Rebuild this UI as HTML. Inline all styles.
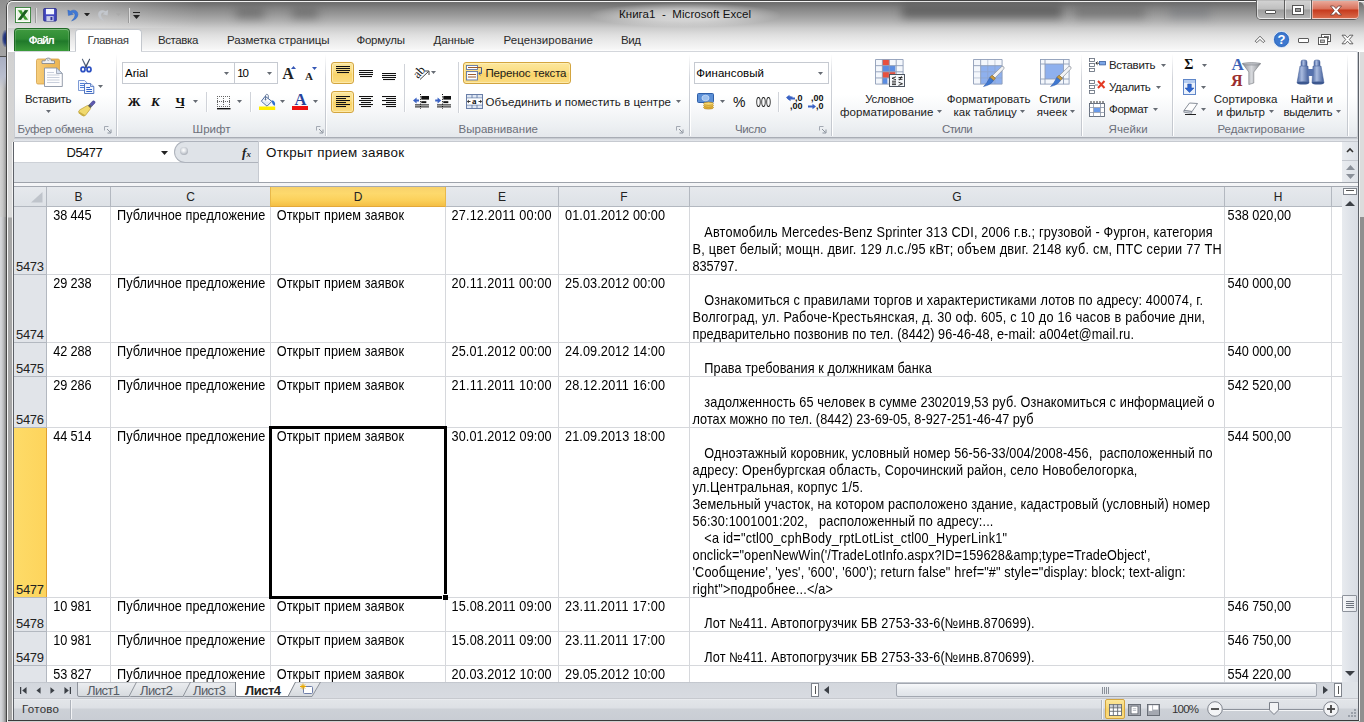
<!DOCTYPE html>
<html lang="ru"><head><meta charset="utf-8"><title>Книга1 - Microsoft Excel</title><style>
html,body{margin:0;padding:0;}
body{width:1364px;height:722px;overflow:hidden;position:relative;background:#7a7a7a;font-family:'Liberation Sans',sans-serif;}
.b{position:absolute;box-sizing:border-box;display:block;}
.t{position:absolute;white-space:pre;display:block;}
</style></head><body>
<div class=b style="left:0px;top:0px;width:1364px;height:722px;background:#9b9b9b"></div>
<div class=b style="left:0px;top:0px;width:7px;height:56px;background:linear-gradient(180deg,#8f8f8f 0,#9d9d9d 20px,#a3a3a3 100%)"></div>
<div class=b style="left:2px;top:30px;width:5px;height:17px;background:radial-gradient(ellipse at 75% 50%,#16286f 0,#2a3c84 40%,rgba(60,75,140,0) 80%)"></div>
<div class=b style="left:0px;top:56px;width:7px;height:1px;background:#4e4e4e"></div>
<div class=b style="left:0px;top:57px;width:7px;height:665px;background:linear-gradient(90deg,#d6d8dc 0,#cfd0d3 25%,#b4b5b7 55%,#858585 85%,#6e6e6e 100%)"></div>
<div class=b style="left:0px;top:57px;width:7px;height:160px;background:linear-gradient(90deg,#d3d3d3 0,#c6c6c6 40%,#a9a9a9 70%,#7c7c7c 100%)"></div>
<div class=b style="left:0px;top:57px;width:6px;height:32px;background:linear-gradient(180deg,#a9afc2 0,#b9bece 60%,rgba(200,203,212,0) 100%)"></div>
<div class=b style="left:6px;top:0px;width:1372px;height:730px;background:#d6d6d6;border:1px solid #454545;border-radius:7px 7px 0 0;"></div>
<div class=b style="left:7px;top:1px;width:1370px;height:730px;border:1px solid #f6f6f6;border-radius:6px 6px 0 0;background:linear-gradient(180deg,#c4c4c4 0,#d2d2d2 60px,#dadada 215px,#a6a6a6 216px,#a6a6a6 100%)"></div>
<div class=b style="left:12px;top:142px;width:1px;height:579px;background:#f4f4f4"></div>
<div class=b style="left:13px;top:142px;width:1px;height:579px;background:#5d6168"></div>
<div class=b style="left:1358px;top:52px;width:1px;height:669px;background:#5d6168"></div>
<div class=b style="left:1359px;top:52px;width:1px;height:669px;background:#f4f4f4"></div>
<div class=b style="left:1360px;top:52px;width:4px;height:165px;background:#dcdcdc"></div>
<div class=b style="left:1360px;top:217px;width:4px;height:505px;background:#8f8f8f"></div>
<div class=b style="left:8px;top:720px;width:1351px;height:1px;background:#3a3a3a"></div>
<div class=b style="left:8px;top:721px;width:1351px;height:1px;background:#d0d0d0"></div>
<div class=b style="left:8px;top:2px;width:1356px;height:50px;border-radius:5px 5px 0 0;background:linear-gradient(180deg,#6f6f6f 0,#727272 2px,#808080 5px,#979797 12px,#afafaf 19px,#cccccc 26px,#dfdfdf 33px,#ececec 40px,#f6f6f6 47px,#ffffff 49px)"></div>
<div class=b style="left:590px;top:3px;width:190px;height:24px;background:radial-gradient(ellipse at 50% 50%,rgba(255,255,255,.6) 0,rgba(255,255,255,.45) 35%,rgba(255,255,255,0) 72%)"></div>
<div class=b style="left:8px;top:2px;width:190px;height:26px;background:linear-gradient(90deg,rgba(255,255,255,.38) 0,rgba(255,255,255,.28) 50%,rgba(255,255,255,0) 100%)"></div>
<div class=b style="left:236px;top:9px;width:28px;height:9px;background:rgba(60,60,60,.45);filter:blur(5px)"></div>
<div class=b style="left:292px;top:9px;width:26px;height:9px;background:rgba(60,60,60,.45);filter:blur(5px)"></div>
<div class=b style="left:902px;top:6px;width:160px;height:12px;background:rgba(45,45,45,.5);filter:blur(5px)"></div>
<div class=b style="left:1075px;top:8px;width:70px;height:10px;background:rgba(60,60,60,.35);filter:blur(5px)"></div>
<div class=b style="left:1170px;top:8px;width:40px;height:10px;background:rgba(70,80,90,.25);filter:blur(5px)"></div>
<span class=t style="left:619.00px;top:6.50px;font:normal normal 11.5px/15px 'Liberation Sans',sans-serif;color:#111;letter-spacing:0.049px;">Книга1  -  Microsoft Excel</span>
<svg class=b style="left:15px;top:7px" width="16" height="16" viewBox="0 0 17 17"><rect x=".5" y=".5" width="16" height="16" fill="#e9f4e4" stroke="#2f7d32"/><rect x="1.5" y="1.5" width="14" height="14" fill="none" stroke="#fff"/><path d="M3 3.5L7 3.5 8.5 6.5 10.5 3.5 14 3.5 10.3 8.6 14 13.5 10.4 13.5 8.4 10.6 6.4 13.5 3 13.5 6.7 8.5Z" fill="#3c9a2e"/><path d="M10.5 3.5L14 3.5 6.4 13.5 3 13.5Z" fill="#1d5c23"/></svg>
<div class=b style="left:35px;top:8px;width:1px;height:15px;background:#9a9a9a"></div>
<div class=b style="left:36px;top:8px;width:1px;height:15px;background:#dcdcdc"></div>
<svg class=b style="left:43.4px;top:8.2px" width="14" height="13.5" viewBox="0 0 15 15"><rect x=".5" y=".5" width="14" height="14" rx="1" fill="#4348c0" stroke="#2a2d8a"/><rect x="3" y="1" width="9" height="6" fill="#f4f6ff"/><rect x="3.5" y="9" width="8" height="5.5" fill="#c9cde8"/><rect x="8" y="10" width="2.2" height="3.5" fill="#30349a"/></svg>
<svg class=b style="left:65.5px;top:8px" width="13" height="14" viewBox="0 0 14 15"><path d="M2 2.2L2.6 8 8 6.6 5.6 5.2C7.8 4 10.2 5.6 9.6 8.4 9.2 10.6 7.6 12.6 6 13.8 9.6 13 12.6 10.6 12.8 7 13 3 8.6.8 4.8 3.4Z" fill="#3f78d6" stroke="#2b5fb8" stroke-width=".5"/></svg>
<svg class=b style="left:83.5px;top:12.55px" width="6" height="3.5" viewBox="0 0 6 3.5"><path d="M0 0H6L3.0 3.5Z" fill="#222"/></svg>
<svg class=b style="left:97px;top:8px" width="13" height="14" viewBox="0 0 14 15"><path d="M12 2.2L11.4 8 6 6.6 8.4 5.2C6.2 4 3.8 5.6 4.4 8.4 4.8 10.6 6.4 12.6 8 13.8 4.4 13 1.4 10.6 1.2 7 1 3 5.4.8 9.2 3.4Z" fill="#c3c7cd"/></svg>
<svg class=b style="left:115.5px;top:13.0px" width="5" height="3" viewBox="0 0 5 3"><path d="M0 0H5L2.5 3Z" fill="#aaa"/></svg>
<div class=b style="left:128px;top:8px;width:1px;height:15px;background:#9a9a9a"></div>
<div class=b style="left:129px;top:8px;width:1px;height:15px;background:#dcdcdc"></div>
<div class=b style="left:133px;top:12px;width:7px;height:1.4px;background:#222"></div>
<svg class=b style="left:133.0px;top:15.0px" width="7" height="4" viewBox="0 0 7 4"><path d="M0 0H7L3.5 4Z" fill="#222"/></svg>
<div class=b style="left:1256px;top:0px;width:103px;height:20px;border:1px solid #5e5e5e;border-top:0;border-radius:0 0 5px 5px;background:#bdbdbd"></div>
<div class=b style="left:1257px;top:1px;width:28px;height:18px;border-radius:0 0 0 4px;border:1px solid rgba(255,255,255,.55);border-top:0;background:linear-gradient(180deg,#d2d2d2 0,#bfbfbf 48%,#9d9d9d 52%,#b4b4b4 100%)"></div>
<div class=b style="left:1285px;top:1px;width:26px;height:18px;border:1px solid rgba(255,255,255,.55);border-top:0;background:linear-gradient(180deg,#d2d2d2 0,#bfbfbf 48%,#9d9d9d 52%,#b4b4b4 100%)"></div>
<div class=b style="left:1284px;top:0px;width:1px;height:19px;background:#5e5e5e"></div>
<div class=b style="left:1311px;top:0px;width:1px;height:19px;background:#5e5e5e"></div>
<div class=b style="left:1312px;top:1px;width:47px;height:18px;border-radius:0 0 4px 0;border:1px solid rgba(255,255,255,.45);border-top:0;background:linear-gradient(180deg,#e9a99a 0,#d9705a 48%,#c6391c 52%,#d8694a 100%)"></div>
<div class=b style="left:1265px;top:10px;width:11px;height:4px;background:#fff;border:1px solid #555;border-radius:1px"></div>
<svg class=b style="left:1292px;top:5px" width="12" height="10" viewBox="0 0 12 10"><rect x=".5" y=".5" width="11" height="9" fill="#fff" stroke="#555"/><rect x="3.5" y="3.5" width="5" height="3" fill="#9a9a9a" stroke="#555"/></svg>
<svg class=b style="left:1329px;top:5px" width="14" height="11" viewBox="0 0 14 11"><path d="M1.5 1h3.2L7 3.6 9.3 1h3.2L8.8 5.5 12.5 10H9.3L7 7.4 4.7 10H1.5L5.2 5.5Z" fill="#fff" stroke="#6b3a33" stroke-width=".8"/></svg>
<div class=b style="left:14px;top:28px;width:56px;height:23px;border-radius:4px 4px 0 0;border:1px solid #1f6a25;border-bottom:0;background:linear-gradient(180deg,#3f9a3f 0,#2e8b33 45%,#20792a 55%,#3a9b39 100%);box-shadow:inset 0 1px 0 rgba(255,255,255,.35), inset 1px 0 0 rgba(255,255,255,.15), inset -1px 0 0 rgba(255,255,255,.15)"></div>
<span class=t style="left:28.70px;top:32.50px;font:normal normal 11.5px/15px 'Liberation Sans',sans-serif;color:#fff;letter-spacing:-0.794px;text-shadow:0 0 .7px #fff">Файл</span>
<div class=b style="left:75px;top:29px;width:67px;height:23px;border-radius:4px 4px 0 0;border:1px solid #c3c7cd;border-bottom:0;background:#fff"></div>
<span class=t style="left:87.50px;top:33.00px;font:normal normal 11.5px/15px 'Liberation Sans',sans-serif;color:#3b3b3b;letter-spacing:-0.380px;">Главная</span>
<span class=t style="left:158.00px;top:33.00px;font:normal normal 11.5px/15px 'Liberation Sans',sans-serif;color:#2a2a2a;letter-spacing:-0.408px;">Вставка</span>
<span class=t style="left:227.00px;top:33.00px;font:normal normal 11.5px/15px 'Liberation Sans',sans-serif;color:#2a2a2a;letter-spacing:-0.114px;">Разметка страницы</span>
<span class=t style="left:356.50px;top:33.00px;font:normal normal 11.5px/15px 'Liberation Sans',sans-serif;color:#2a2a2a;letter-spacing:-0.258px;">Формулы</span>
<span class=t style="left:433.50px;top:33.00px;font:normal normal 11.5px/15px 'Liberation Sans',sans-serif;color:#2a2a2a;letter-spacing:-0.113px;">Данные</span>
<span class=t style="left:503.50px;top:33.00px;font:normal normal 11.5px/15px 'Liberation Sans',sans-serif;color:#2a2a2a;letter-spacing:0.053px;">Рецензирование</span>
<span class=t style="left:621.00px;top:33.00px;font:normal normal 11.5px/15px 'Liberation Sans',sans-serif;color:#2a2a2a;letter-spacing:-0.406px;">Вид</span>
<svg class=b style="left:1254px;top:34px" width="12" height="10" viewBox="0 0 12 10"><path d="M1.2 7.2L6 2.2 10.8 7.2 9.2 8.6 6 5.4 2.8 8.6Z" fill="#fff" stroke="#555" stroke-width=".9"/></svg>
<svg class=b style="left:1273px;top:31px" width="17" height="17" viewBox="0 0 17 17"><circle cx="8.5" cy="8.5" r="8" fill="#3c78cf" stroke="#dfe9f7" stroke-width="1"/><circle cx="8.5" cy="8.5" r="7" fill="none" stroke="#2d63b4" stroke-width=".6"/></svg>
<span class=t style="left:1277.52px;top:31.00px;font:normal bold 13px/17px 'Liberation Sans',sans-serif;color:#fff;">?</span>
<div class=b style="left:1298px;top:38px;width:11px;height:5px;background:#fff;border:1px solid #5a5a5a;border-radius:1px"></div>
<svg class=b style="left:1318px;top:34px" width="13" height="11" viewBox="0 0 13 11"><rect x="3.5" y=".5" width="9" height="7" fill="#fff" stroke="#5a5a5a"/><rect x="6.5" y="2.5" width="4" height="2.5" fill="#fff" stroke="#5a5a5a" stroke-width=".8"/><rect x=".5" y="3.5" width="9" height="7" fill="#fff" stroke="#5a5a5a"/><rect x="2.5" y="6" width="4" height="2.5" fill="#bbb" stroke="#5a5a5a" stroke-width=".8"/></svg>
<svg class=b style="left:1341px;top:34px" width="13" height="11" viewBox="0 0 13 11"><path d="M1 1.2h3.2L6.5 3.8 8.8 1.2H12L8.3 5.5 12 9.8H8.8L6.5 7.2 4.2 9.8H1L4.7 5.5Z" fill="#fff" stroke="#555" stroke-width=".9"/></svg>
<div class=b style="left:14px;top:51px;width:1344px;height:87px;border:1px solid #c9cdd3;border-top-color:#d3d6db;border-bottom-color:#a9adb5;border-radius:0 2px 2px 1px;background:linear-gradient(180deg,#ffffff 0,#ffffff 50%,#f6f7f9 70%,#eceff2 88%,#e5e8ec 100%)"></div>
<div class=b style="left:76px;top:50px;width:65px;height:2px;background:#fff"></div>
<div class=b style="left:14px;top:138px;width:1344px;height:4px;background:linear-gradient(180deg,#b8bcc3 0,#d9dce1 1px,#e4e7ec 3px,#a8acb4 4px)"></div>
<div class=b style="left:116px;top:54px;width:1px;height:82px;background:linear-gradient(180deg,rgba(200,204,211,0) 0,#d0d3d9 30%,#c2c6cd 100%)"></div>
<div class=b style="left:117px;top:54px;width:1px;height:82px;background:linear-gradient(180deg,rgba(255,255,255,0) 0,#fff 30%,#fff 100%)"></div>
<div class=b style="left:325px;top:54px;width:1px;height:82px;background:linear-gradient(180deg,rgba(200,204,211,0) 0,#d0d3d9 30%,#c2c6cd 100%)"></div>
<div class=b style="left:326px;top:54px;width:1px;height:82px;background:linear-gradient(180deg,rgba(255,255,255,0) 0,#fff 30%,#fff 100%)"></div>
<div class=b style="left:689px;top:54px;width:1px;height:82px;background:linear-gradient(180deg,rgba(200,204,211,0) 0,#d0d3d9 30%,#c2c6cd 100%)"></div>
<div class=b style="left:690px;top:54px;width:1px;height:82px;background:linear-gradient(180deg,rgba(255,255,255,0) 0,#fff 30%,#fff 100%)"></div>
<div class=b style="left:831px;top:54px;width:1px;height:82px;background:linear-gradient(180deg,rgba(200,204,211,0) 0,#d0d3d9 30%,#c2c6cd 100%)"></div>
<div class=b style="left:832px;top:54px;width:1px;height:82px;background:linear-gradient(180deg,rgba(255,255,255,0) 0,#fff 30%,#fff 100%)"></div>
<div class=b style="left:1081px;top:54px;width:1px;height:82px;background:linear-gradient(180deg,rgba(200,204,211,0) 0,#d0d3d9 30%,#c2c6cd 100%)"></div>
<div class=b style="left:1082px;top:54px;width:1px;height:82px;background:linear-gradient(180deg,rgba(255,255,255,0) 0,#fff 30%,#fff 100%)"></div>
<div class=b style="left:1172px;top:54px;width:1px;height:82px;background:linear-gradient(180deg,rgba(200,204,211,0) 0,#d0d3d9 30%,#c2c6cd 100%)"></div>
<div class=b style="left:1173px;top:54px;width:1px;height:82px;background:linear-gradient(180deg,rgba(255,255,255,0) 0,#fff 30%,#fff 100%)"></div>
<div class=b style="left:1347px;top:54px;width:1px;height:82px;background:linear-gradient(180deg,rgba(200,204,211,0) 0,#d0d3d9 30%,#c2c6cd 100%)"></div>
<div class=b style="left:1348px;top:54px;width:1px;height:82px;background:linear-gradient(180deg,rgba(255,255,255,0) 0,#fff 30%,#fff 100%)"></div>
<svg class=b style="left:35px;top:56px" width="29" height="32" viewBox="0 0 29 32"><defs><linearGradient id="pb" x1="0" x2="1"><stop offset="0" stop-color="#f7cf7e"/><stop offset=".5" stop-color="#f1bd5e"/><stop offset="1" stop-color="#eab453"/></linearGradient></defs><rect x="1.5" y="3" width="23" height="25" rx="1.5" fill="url(#pb)" stroke="#d3a046" stroke-width=".8"/><path d="M7 7.500V4.800H10.200C10.200 1.200 16.300 1.200 16.300 4.800H19.500V7.500Z" fill="#eef0f3" stroke="#7c828c" stroke-width=".8"/><circle cx="13.250" cy="3.600" r="1" fill="#fff" stroke="#7c828c" stroke-width=".5"/><path d="M9.500 12H21.500L27.300 17.500V30.500H9.500Z" fill="#fdfdfe" stroke="#8a93a3" stroke-width=".9"/><path d="M21.500 12V17.500H27.300Z" fill="#d9e2f2" stroke="#8a93a3" stroke-width=".7"/><path d="M12 16.500H19M12 19H24.500M12 21.500H24.500M12 24H24.500M12 26.500H24.500" stroke="#c3cad8" stroke-width=".9"/></svg>
<span class=t style="left:25.00px;top:91.80px;font:normal normal 11.5px/15px 'Liberation Sans',sans-serif;color:#222;letter-spacing:-0.321px;">Вставить</span>
<svg class=b style="left:45.5px;top:110.2px" width="5" height="3" viewBox="0 0 5 3"><path d="M0 0H5L2.5 3Z" fill="#666b73"/></svg>
<svg class=b style="left:79.5px;top:57.5px" width="12" height="15" viewBox="0 0 12 15"><path d="M2.600 .5L7.300 9.500L6 10.200L1.800 1.200Z" fill="#56657e"/><path d="M9.400 .5L4.700 9.500L6 10.200L10.200 1.200Z" fill="#3f4d66"/><ellipse cx="3" cy="11.400" rx="2" ry="2.300" fill="none" stroke="#2c50c2" stroke-width="1.700"/><ellipse cx="9" cy="11.400" rx="2" ry="2.300" fill="none" stroke="#2c50c2" stroke-width="1.700"/></svg>
<svg class=b style="left:77.5px;top:79.5px" width="17" height="14" viewBox="0 0 17 14"><path d="M.5.5H6.500L9.500 3.300V10.500H.5Z" fill="#f3f7ff" stroke="#6d8fd0" stroke-width=".9"/><path d="M2 3.500H6M2 5.500H7.500M2 7.500H7.500" stroke="#4f7fd6" stroke-width="1"/><path d="M6.500 3.500H12.500L15.800 6.500V13.500H6.500Z" fill="#f3f7ff" stroke="#3f66b8" stroke-width=".9"/><path d="M12.500 3.500V6.500H15.800" fill="#c9d8f3" stroke="#3f66b8" stroke-width=".7"/><path d="M8.300 7.500H12M8.300 9.500H14M8.300 11.500H14" stroke="#2f62c8" stroke-width="1.100"/></svg>
<svg class=b style="left:98.0px;top:85.2px" width="5" height="3" viewBox="0 0 5 3"><path d="M0 0H5L2.5 3Z" fill="#666b73"/></svg>
<svg class=b style="left:77px;top:100px" width="19" height="17" viewBox="0 0 19 17"><path d="M12.800 4.200L15.500 1.200Q16.800 .4 17.800 1.500Q18.500 2.600 17.500 3.600L14.800 6.200Z" fill="#5d59b0" stroke="#3b3a86" stroke-width=".6"/><path d="M10.800 5.800L12.600 4 15 6.400 13.200 8.200Z" fill="#55585f"/><path d="M3.200 9.600L10.600 5.400 13.600 8.600 8.400 15.400Q6.500 16.400 4.800 15.200L1.500 12.200Q1.800 10.400 3.200 9.600Z" fill="#f0d96e" stroke="#b79a35" stroke-width=".7"/><path d="M2 12.500L7.500 15.800" stroke="#c9ad42" stroke-width="1.600"/></svg>
<span class=t style="left:17.60px;top:122.00px;font:normal normal 11.5px/15px 'Liberation Sans',sans-serif;color:#6c6f7a;letter-spacing:-0.205px;">Буфер обмена</span>
<svg class=b style="left:104px;top:126px" width="8" height="8" viewBox="0 0 8 8"><path d="M.5 4.5V.5H4.5" fill="none" stroke="#a3a9b3"/><path d="M3 3L6.5 6.5M7 3.5V7H3.5" fill="none" stroke="#8b929d" stroke-width="1"/></svg>
<div class=b style="left:122px;top:62px;width:113px;height:22px;background:#fff;border:1px solid #c6cad1"></div>
<div class=b style="left:234px;top:62px;width:44px;height:22px;background:#fff;border:1px solid #c6cad1"></div>
<span class=t style="left:125.00px;top:65.50px;font:normal normal 11.5px/15px 'Liberation Sans',sans-serif;color:#000;letter-spacing:-0.004px;">Arial</span>
<svg class=b style="left:224.0px;top:72.0px" width="5" height="3" viewBox="0 0 5 3"><path d="M0 0H5L2.5 3Z" fill="#666b73"/></svg>
<span class=t style="left:237.30px;top:65.50px;font:normal normal 11.5px/15px 'Liberation Sans',sans-serif;color:#000;letter-spacing:-1.297px;">10</span>
<svg class=b style="left:267.0px;top:72.0px" width="5" height="3" viewBox="0 0 5 3"><path d="M0 0H5L2.5 3Z" fill="#666b73"/></svg>
<span class=t style="left:282.30px;top:63.30px;font:normal bold 16px/21px 'Liberation Serif',serif;color:#222;letter-spacing:1.637px;">A</span>
<svg class=b style="left:291.3px;top:66px" width="5" height="3" viewBox="0 0 5 3"><path d="M0 3H5L2.5 0Z" fill="#3557b5"/></svg>
<span class=t style="left:305.00px;top:68.60px;font:normal bold 11px/14px 'Liberation Serif',serif;color:#222;letter-spacing:3.447px;transform:scaleX(1.0)">A</span>
<svg class=b style="left:312px;top:66.8px" width="5" height="3" viewBox="0 0 5 3"><path d="M0 0H5L2.5 3Z" fill="#3557b5"/></svg>
<span class=t style="left:127.80px;top:93.00px;font:normal bold 13px/17px 'Liberation Serif',serif;color:#111;letter-spacing:0.341px;">Ж</span>
<span class=t style="left:151.00px;top:93.00px;font:italic bold 13px/17px 'Liberation Serif',serif;color:#111;letter-spacing:3.172px;">К</span>
<span class=t style="left:175.50px;top:93.00px;font:normal bold 13px/17px 'Liberation Serif',serif;color:#111;letter-spacing:-1.047px;text-decoration:underline">Ч</span>
<svg class=b style="left:193.0px;top:100.0px" width="5" height="3" viewBox="0 0 5 3"><path d="M0 0H5L2.5 3Z" fill="#666b73"/></svg>
<div class=b style="left:206px;top:92px;width:1px;height:20px;background:#d0d3d9"></div>
<div class=b style="left:207px;top:92px;width:1px;height:20px;background:#fff"></div>
<svg class=b style="left:217px;top:95px" width="14" height="15" viewBox="0 0 14 15"><path d="M0 1.5H13" stroke="#666" stroke-width="1" stroke-dasharray="1 1"/><path d="M0 6.5H13" stroke="#666" stroke-width="1" stroke-dasharray="1 1"/><path d="M0 11.5H13" stroke="#666" stroke-width="1" stroke-dasharray="1 1"/><path d="M0.5 1V12" stroke="#666" stroke-width="1" stroke-dasharray="1 1"/><path d="M6.5 1V12" stroke="#666" stroke-width="1" stroke-dasharray="1 1"/><path d="M12.5 1V12" stroke="#666" stroke-width="1" stroke-dasharray="1 1"/><path d="M0 13.700H13.500" stroke="#111" stroke-width="1.400"/></svg>
<svg class=b style="left:237.0px;top:100.0px" width="5" height="3" viewBox="0 0 5 3"><path d="M0 0H5L2.5 3Z" fill="#666b73"/></svg>
<div class=b style="left:250px;top:92px;width:1px;height:20px;background:#d0d3d9"></div>
<div class=b style="left:251px;top:92px;width:1px;height:20px;background:#fff"></div>
<svg class=b style="left:258.8px;top:92.5px" width="17" height="17" viewBox="0 0 17 17"><path d="M6.200 3.200L12.800 8.400 8 13.200 2.400 8.200Z" fill="#fdfdfe" stroke="#44659c" stroke-width="1"/><path d="M6.500 6.500V3C6.500 .8 9.300 .8 9.300 3V5.600" fill="none" stroke="#5a6f93" stroke-width=".9"/><circle cx="6.500" cy="6.500" r=".9" fill="#5a6f93"/><path d="M12.800 7.200C15.300 7.500 16.600 9.400 16 12.800 14 12 13.200 10.400 12.800 8.400Z" fill="#2f6fd0"/><path d="M3.500 8.200L8 12.200 12 8.400" fill="#dfe8f6" stroke="none"/><rect x="0" y="13.500" width="16.200" height="3.500" fill="#ffee00"/></svg>
<svg class=b style="left:279.5px;top:100.0px" width="5" height="3" viewBox="0 0 5 3"><path d="M0 0H5L2.5 3Z" fill="#666b73"/></svg>
<span class=t style="left:294.60px;top:88.90px;font:normal bold 16.5px/21px 'Liberation Serif',serif;color:#27439c;">A</span>
<div class=b style="left:291.8px;top:106px;width:16.2px;height:3.5px;background:#ee1111"></div>
<svg class=b style="left:313.0px;top:100.0px" width="5" height="3" viewBox="0 0 5 3"><path d="M0 0H5L2.5 3Z" fill="#666b73"/></svg>
<span class=t style="left:192.60px;top:122.00px;font:normal normal 11.5px/15px 'Liberation Sans',sans-serif;color:#6c6f7a;letter-spacing:0.039px;">Шрифт</span>
<svg class=b style="left:316px;top:126px" width="8" height="8" viewBox="0 0 8 8"><path d="M.5 4.5V.5H4.5" fill="none" stroke="#a3a9b3"/><path d="M3 3L6.5 6.5M7 3.5V7H3.5" fill="none" stroke="#8b929d" stroke-width="1"/></svg>
<div class=b style="left:331px;top:62px;width:23px;height:22px;border:1px solid #d3a53f;border-radius:3px;background:linear-gradient(180deg,#fce79c 0,#fbdd82 45%,#f9d469 55%,#fbdc82 100%);box-shadow:inset 0 0 0 1px rgba(255,244,200,.55)"></div>
<div class=b style="left:331px;top:90.5px;width:23px;height:22px;border:1px solid #d3a53f;border-radius:3px;background:linear-gradient(180deg,#fce79c 0,#fbdd82 45%,#f9d469 55%,#fbdc82 100%);box-shadow:inset 0 0 0 1px rgba(255,244,200,.55)"></div>
<svg class=b style="left:336px;top:66px" width="14" height="8" viewBox="0 0 14 8"><rect x="0.0" y="0" width="14" height="1.05" fill="#111"/><rect x="0.0" y="2" width="14" height="1.05" fill="#111"/><rect x="0.0" y="4" width="14" height="1.05" fill="#111"/><rect x="1.0" y="6" width="12" height="1.05" fill="#111"/></svg>
<svg class=b style="left:359px;top:70px" width="14" height="8" viewBox="0 0 14 8"><rect x="0.0" y="0" width="14" height="1.05" fill="#111"/><rect x="0.0" y="2" width="14" height="1.05" fill="#111"/><rect x="0.0" y="4" width="14" height="1.05" fill="#111"/><rect x="1.0" y="6" width="12" height="1.05" fill="#111"/></svg>
<svg class=b style="left:382px;top:73px" width="14" height="8" viewBox="0 0 14 8"><rect x="0.0" y="0" width="14" height="1.05" fill="#111"/><rect x="0.0" y="2" width="14" height="1.05" fill="#111"/><rect x="0.0" y="4" width="14" height="1.05" fill="#111"/><rect x="1.0" y="6" width="12" height="1.05" fill="#111"/></svg>
<div class=b style="left:404px;top:64px;width:1px;height:48px;background:#d0d3d9"></div>
<div class=b style="left:405px;top:64px;width:1px;height:48px;background:#fff"></div>
<span class=t style="left:413.20px;top:63.50px;font:normal normal 12.5px/16px 'Liberation Serif',serif;color:#111;transform:rotate(-48deg);transform-origin:50% 50%">ab</span>
<svg class=b style="left:418px;top:69px" width="13" height="12" viewBox="0 0 13 12"><path d="M2 10.5L10.5 2.5" stroke="#444" stroke-width="1"/><path d="M7 2H11V6" fill="none" stroke="#444" stroke-width="1"/></svg>
<svg class=b style="left:431.3px;top:71.0px" width="5" height="3" viewBox="0 0 5 3"><path d="M0 0H5L2.5 3Z" fill="#666b73"/></svg>
<svg class=b style="left:336px;top:96px" width="14" height="12" viewBox="0 0 14 12"><rect x="0" y="0" width="14" height="1.05" fill="#111"/><rect x="0" y="2" width="10" height="1.05" fill="#111"/><rect x="0" y="4" width="14" height="1.05" fill="#111"/><rect x="0" y="6" width="10" height="1.05" fill="#111"/><rect x="0" y="8" width="14" height="1.05" fill="#111"/><rect x="0" y="10" width="10" height="1.05" fill="#111"/></svg>
<svg class=b style="left:359px;top:96px" width="14" height="12" viewBox="0 0 14 12"><rect x="0.0" y="0" width="14" height="1.05" fill="#111"/><rect x="2.0" y="2" width="10" height="1.05" fill="#111"/><rect x="0.0" y="4" width="14" height="1.05" fill="#111"/><rect x="2.0" y="6" width="10" height="1.05" fill="#111"/><rect x="0.0" y="8" width="14" height="1.05" fill="#111"/><rect x="2.0" y="10" width="10" height="1.05" fill="#111"/></svg>
<svg class=b style="left:382px;top:96px" width="14" height="12" viewBox="0 0 14 12"><rect x="0" y="0" width="14" height="1.05" fill="#111"/><rect x="4" y="2" width="10" height="1.05" fill="#111"/><rect x="0" y="4" width="14" height="1.05" fill="#111"/><rect x="4" y="6" width="10" height="1.05" fill="#111"/><rect x="0" y="8" width="14" height="1.05" fill="#111"/><rect x="4" y="10" width="10" height="1.05" fill="#111"/></svg>
<svg class=b style="left:413px;top:94px" width="17" height="15" viewBox="0 0 17 15"><path d="M0 6.5L3.6 3.4V5.6H6V7.4H3.6V9.6Z" fill="#3a62c4"/><rect x="8.3" y="2" width="7.7" height="3.6" fill="#111"/><rect x="8.3" y="7.2" width="5" height="1.9" fill="#111"/><path d="M2 10.9H16M2 12.9H16" stroke="#111" stroke-width="1"/><path d="M7.5 0V15" stroke="#111" stroke-width="1" stroke-dasharray="1 1.4"/></svg>
<svg class=b style="left:435px;top:94px" width="17" height="15" viewBox="0 0 17 15"><path d="M6.2 6.5L2.6 3.4V5.6H.2V7.4H2.6V9.6Z" fill="#3a62c4"/><rect x="8.3" y="2" width="7.7" height="3.6" fill="#111"/><rect x="8.3" y="7.2" width="5" height="1.9" fill="#111"/><path d="M2 10.9H16M2 12.9H16" stroke="#111" stroke-width="1"/><path d="M7.5 0V15" stroke="#111" stroke-width="1" stroke-dasharray="1 1.4"/></svg>
<div class=b style="left:458px;top:62px;width:1px;height:51px;background:#d0d3d9"></div>
<div class=b style="left:459px;top:62px;width:1px;height:51px;background:#fff"></div>
<div class=b style="left:463px;top:62px;width:108px;height:22px;border:1px solid #d3a53f;border-radius:3px;background:linear-gradient(180deg,#fce79c 0,#fbdd82 45%,#f9d469 55%,#fbdc82 100%);box-shadow:inset 0 0 0 1px rgba(255,244,200,.55)"></div>
<svg class=b style="left:466px;top:64.5px" width="17" height="16" viewBox="0 0 17 16"><rect x=".5" y=".5" width="11" height="4" fill="#fff" stroke="#5f77a6" stroke-width=".9"/><path d="M2 2.500H15.500" stroke="#9a5a2c" stroke-width="1"/><path d="M15.500 2.500V8.500L13 8.500M14.500 6.800L12.800 8.500 14.500 10.200" fill="none" stroke="#3f5f9a" stroke-width="1"/><rect x=".5" y="6.500" width="11" height="8.500" fill="#e9eef8" stroke="#5f77a6" stroke-width=".9"/><rect x="1.500" y="7.500" width="9" height="6.500" fill="#fff"/><path d="M2 9.500H10M2 12H10" stroke="#9a5a2c" stroke-width="1.100"/></svg>
<span class=t style="left:485.50px;top:65.50px;font:normal normal 11.5px/15px 'Liberation Sans',sans-serif;color:#1a1a1a;letter-spacing:-0.163px;">Перенос текста</span>
<svg class=b style="left:466px;top:94px" width="17" height="15" viewBox="0 0 17 15"><rect x=".5" y=".5" width="16" height="14" fill="#dfe7f4" stroke="#6a7fa8"/><path d="M.5 4H16.5M.5 11H16.5M6 .5V4M11 .5V4M6 11V14.5M11 11V14.5" stroke="#6a7fa8" stroke-width=".9"/><rect x="1" y="4.5" width="15" height="6" fill="#fff"/><path d="M1.5 7.5H4.5M15.5 7.5H12.5" stroke="#333" stroke-width="1"/><path d="M3 6L1.2 7.5 3 9M14 6L15.8 7.5 14 9" fill="none" stroke="#333" stroke-width=".8"/></svg>
<span class=t style="left:6.00px;top:1.00px;font:normal bold 9px/12px 'Liberation Serif',serif;color:#111;left:472px;top:95px">a</span>
<span class=t style="left:485.50px;top:94.50px;font:normal normal 11.5px/15px 'Liberation Sans',sans-serif;color:#1a1a1a;letter-spacing:0.055px;">Объединить и поместить в центре</span>
<svg class=b style="left:676.0px;top:100.0px" width="5" height="3" viewBox="0 0 5 3"><path d="M0 0H5L2.5 3Z" fill="#666b73"/></svg>
<span class=t style="left:458.50px;top:122.00px;font:normal normal 11.5px/15px 'Liberation Sans',sans-serif;color:#6c6f7a;letter-spacing:0.030px;">Выравнивание</span>
<svg class=b style="left:676px;top:126px" width="8" height="8" viewBox="0 0 8 8"><path d="M.5 4.5V.5H4.5" fill="none" stroke="#a3a9b3"/><path d="M3 3L6.5 6.5M7 3.5V7H3.5" fill="none" stroke="#8b929d" stroke-width="1"/></svg>
<div class=b style="left:694px;top:62px;width:135px;height:22px;background:#fff;border:1px solid #c6cad1"></div>
<span class=t style="left:696.30px;top:65.50px;font:normal normal 11.5px/15px 'Liberation Sans',sans-serif;color:#000;letter-spacing:0.040px;">Финансовый</span>
<svg class=b style="left:818.0px;top:72.0px" width="5" height="3" viewBox="0 0 5 3"><path d="M0 0H5L2.5 3Z" fill="#666b73"/></svg>
<svg class=b style="left:697px;top:93px" width="19" height="17" viewBox="0 0 19 17"><rect x=".5" y=".5" width="16" height="9" rx="1" fill="#5b8fd6" stroke="#2f5fa8"/><ellipse cx="8.5" cy="5" rx="3.6" ry="2.8" fill="#9cc0ee" stroke="#dbe8fa" stroke-width=".6"/><ellipse cx="11.5" cy="14.5" rx="5" ry="1.6" fill="#e8b53a" stroke="#a87a18" stroke-width=".6"/><ellipse cx="11.5" cy="12.6" rx="5" ry="1.6" fill="#f2c850" stroke="#a87a18" stroke-width=".6"/><ellipse cx="11.5" cy="10.7" rx="5" ry="1.6" fill="#f8d870" stroke="#a87a18" stroke-width=".6"/></svg>
<svg class=b style="left:719.5px;top:100.0px" width="5" height="3" viewBox="0 0 5 3"><path d="M0 0H5L2.5 3Z" fill="#666b73"/></svg>
<span class=t style="left:733.00px;top:92.50px;font:normal normal 14px/18px 'Liberation Sans',sans-serif;color:#111;letter-spacing:0.047px;">%</span>
<span class=t style="left:755.50px;top:93.00px;font:normal normal 14px/18px 'Liberation Sans',sans-serif;color:#111;transform:scaleX(.64);transform-origin:0 50%">000</span>
<div class=b style="left:778px;top:92px;width:1px;height:20px;background:#d0d3d9"></div>
<div class=b style="left:779px;top:92px;width:1px;height:20px;background:#fff"></div>
<svg class=b style="left:786px;top:94px" width="18" height="15" viewBox="0 0 18 15"><path d="M6.5 3.5L3 .8V2.6H0V4.4H3V6.2Z" fill="#3a62c4" transform="translate(6.5,0) scale(-1,1)"/></svg>
<span class=t style="left:795.00px;top:92.00px;font:normal bold 9px/12px 'Liberation Sans',sans-serif;color:#111;">,0</span>
<span class=t style="left:790.00px;top:100.00px;font:normal bold 9px/12px 'Liberation Sans',sans-serif;color:#111;">,00</span>
<span class=t style="left:811.00px;top:92.00px;font:normal bold 9px/12px 'Liberation Sans',sans-serif;color:#111;">,00</span>
<span class=t style="left:816.00px;top:100.00px;font:normal bold 9px/12px 'Liberation Sans',sans-serif;color:#111;">,0</span>
<svg class=b style="left:808px;top:103px" width="8" height="7" viewBox="0 0 8 7"><path d="M8 3.5L4.5 .8V2.6H0V4.4H4.5V6.2Z" fill="#3a62c4"/></svg>
<svg class=b style="left:787px;top:94.5px" width="8" height="7" viewBox="0 0 8 7"><path d="M0 3.5L3.5 .8V2.6H8V4.4H3.5V6.2Z" fill="#3a62c4"/></svg>
<span class=t style="left:735.00px;top:122.00px;font:normal normal 11.5px/15px 'Liberation Sans',sans-serif;color:#6c6f7a;letter-spacing:-0.395px;">Число</span>
<svg class=b style="left:819px;top:126px" width="8" height="8" viewBox="0 0 8 8"><path d="M.5 4.5V.5H4.5" fill="none" stroke="#a3a9b3"/><path d="M3 3L6.5 6.5M7 3.5V7H3.5" fill="none" stroke="#8b929d" stroke-width="1"/></svg>
<svg class=b style="left:875px;top:58.7px" width="31" height="29" viewBox="0 0 31 29"><rect x=".5" y=".5" width="27.600" height="24.600" fill="#f4f7fc"/><rect x="7.400" y=".5" width="6.900" height="6.150" fill="#e8503e"/><rect x="7.400" y="6.650" width="13" height="6.150" fill="#5b8de2"/><rect x="7.400" y="12.800" width="13" height="6.150" fill="#e8503e"/><rect x="7.400" y="18.950" width="5" height="6.150" fill="#5b8de2"/><path d="M0.50 .5V25.100M.5 0.50H28.100" stroke="#8e9db8" stroke-width=".9"/><path d="M7.40 .5V25.100M.5 6.65H28.100" stroke="#8e9db8" stroke-width=".9"/><path d="M14.30 .5V25.100M.5 12.80H28.100" stroke="#8e9db8" stroke-width=".9"/><path d="M21.20 .5V25.100M.5 18.95H28.100" stroke="#8e9db8" stroke-width=".9"/><path d="M28.10 .5V25.100M.5 25.10H28.100" stroke="#8e9db8" stroke-width=".9"/><rect x="14.500" y="15.500" width="15" height="12" fill="#f6f8fb" stroke="#4d5561"/><path d="M21 17.800L17 19.300 21 20.800M17 22.200H21M23.500 18.500H27.500M23.500 20.300H27.500M26.500 17.300L24.500 21.300M17 24H21M17 25.600H21M23.500 23.200L27.500 24.800 23.500 26.400" fill="none" stroke="#1d1d1d" stroke-width=".9"/></svg>
<span class=t style="left:865.30px;top:91.80px;font:normal normal 11.5px/15px 'Liberation Sans',sans-serif;color:#222;letter-spacing:-0.297px;">Условное</span>
<span class=t style="left:840.00px;top:104.80px;font:normal normal 11.5px/15px 'Liberation Sans',sans-serif;color:#222;letter-spacing:0.089px;">форматирование</span>
<svg class=b style="left:936.5px;top:110.2px" width="5" height="3" viewBox="0 0 5 3"><path d="M0 0H5L2.5 3Z" fill="#666b73"/></svg>
<svg class=b style="left:973px;top:58.7px" width="33" height="31" viewBox="0 0 33 31"><rect x=".5" y=".5" width="28.600" height="24.600" fill="#f4f7fc"/><rect x="7.650" y="6.650" width="21.450" height="18.450" fill="#8eb0ee"/><path d="M0.50 .5V25.100M.5 0.50H29.100" stroke="#8e9db8" stroke-width=".9" opacity="1"/><path d="M7.65 .5V25.100M.5 6.65H29.100" stroke="#8e9db8" stroke-width=".9" opacity="1"/><path d="M14.80 .5V25.100M.5 12.80H29.100" stroke="#8e9db8" stroke-width=".9" opacity="0.55"/><path d="M21.95 .5V25.100M.5 18.95H29.100" stroke="#8e9db8" stroke-width=".9" opacity="0.55"/><path d="M29.10 .5V25.100M.5 25.10H29.100" stroke="#8e9db8" stroke-width=".9" opacity="1"/><g transform="translate(10.5,7)"><path d="M18.200 .6Q19.600 -.2 20.400 1Q21 2.200 20 3.200L11.500 12 8.800 9.500Z" fill="#f2f3f5" stroke="#8a8f98" stroke-width=".7"/><path d="M8.600 9.200L11.800 12.200 10 14.600 6.200 11.400Z" fill="#c89a3e" stroke="#8f6a1e" stroke-width=".6"/><path d="M6.300 11.500L9.900 14.600C8.500 17.500 4.500 19.600 0 20.500 2.800 18 4.400 15 6.300 11.500Z" fill="#3f78d0" stroke="#2a57a8" stroke-width=".5"/></g></svg>
<span class=t style="left:946.70px;top:91.80px;font:normal normal 11.5px/15px 'Liberation Sans',sans-serif;color:#222;letter-spacing:0.029px;">Форматировать</span>
<span class=t style="left:953.50px;top:104.80px;font:normal normal 11.5px/15px 'Liberation Sans',sans-serif;color:#222;letter-spacing:0.032px;">как таблицу</span>
<svg class=b style="left:1020.0px;top:110.2px" width="5" height="3" viewBox="0 0 5 3"><path d="M0 0H5L2.5 3Z" fill="#666b73"/></svg>
<svg class=b style="left:1040px;top:58.7px" width="33" height="31" viewBox="0 0 33 31"><rect x=".5" y=".5" width="28.600" height="24.600" fill="#f4f7fc" stroke="#8e9db8" stroke-width=".9"/><rect x="5" y="5" width="18.500" height="15" fill="#8eb0ee"/><path d="M.5 5H29.100M.5 20H29.100M5 .5V25.100M23.500 .5V25.100" stroke="#8e9db8" stroke-width=".9"/><g transform="translate(10.5,7)"><path d="M18.200 .6Q19.600 -.2 20.400 1Q21 2.200 20 3.200L11.500 12 8.800 9.500Z" fill="#f2f3f5" stroke="#8a8f98" stroke-width=".7"/><path d="M8.600 9.200L11.800 12.200 10 14.600 6.200 11.400Z" fill="#c89a3e" stroke="#8f6a1e" stroke-width=".6"/><path d="M6.300 11.500L9.900 14.600C8.500 17.500 4.500 19.600 0 20.500 2.800 18 4.400 15 6.300 11.500Z" fill="#3f78d0" stroke="#2a57a8" stroke-width=".5"/></g></svg>
<span class=t style="left:1039.30px;top:91.80px;font:normal normal 11.5px/15px 'Liberation Sans',sans-serif;color:#222;letter-spacing:-0.460px;">Стили</span>
<span class=t style="left:1036.80px;top:104.80px;font:normal normal 11.5px/15px 'Liberation Sans',sans-serif;color:#222;letter-spacing:0.038px;">ячеек</span>
<svg class=b style="left:1070.0px;top:110.2px" width="5" height="3" viewBox="0 0 5 3"><path d="M0 0H5L2.5 3Z" fill="#666b73"/></svg>
<span class=t style="left:942.00px;top:122.00px;font:normal normal 11.5px/15px 'Liberation Sans',sans-serif;color:#6c6f7a;letter-spacing:-0.635px;">Стили</span>
<svg class=b style="left:1089px;top:58px" width="17" height="14" viewBox="0 0 17 14"><rect x=".5" y=".5" width="5" height="3" fill="#fff" stroke="#5c6675" stroke-width=".8"/><rect x=".5" y="5.5" width="5" height="3" fill="#fff" stroke="#5c6675" stroke-width=".8"/><rect x=".5" y="10.5" width="5" height="3" fill="#fff" stroke="#5c6675" stroke-width=".8"/><rect x="10.5" y="3.5" width="6" height="3.4" fill="#7da7e8" stroke="#3b5f9f" stroke-width=".8"/><path d="M10 5.2H7M8.6 3.6L6.8 5.2 8.6 6.8" fill="none" stroke="#222" stroke-width=".9"/></svg>
<span class=t style="left:1109.00px;top:57.50px;font:normal normal 11.5px/15px 'Liberation Sans',sans-serif;color:#222;letter-spacing:-0.336px;">Вставить</span>
<svg class=b style="left:1160.8px;top:64.0px" width="5" height="3" viewBox="0 0 5 3"><path d="M0 0H5L2.5 3Z" fill="#666b73"/></svg>
<svg class=b style="left:1089px;top:80px" width="17" height="14" viewBox="0 0 17 14"><rect x=".5" y=".5" width="5" height="3" fill="#fff" stroke="#5c6675" stroke-width=".8"/><rect x=".5" y="5.5" width="5" height="3" fill="#fff" stroke="#5c6675" stroke-width=".8"/><rect x=".5" y="10.5" width="5" height="3" fill="#fff" stroke="#5c6675" stroke-width=".8"/><path d="M6 5H9" stroke="#5c6675" stroke-width=".8"/><path d="M9 1L15.5 8M15.5 1L9 8" stroke="#e33a24" stroke-width="2"/></svg>
<span class=t style="left:1109.00px;top:79.50px;font:normal normal 11.5px/15px 'Liberation Sans',sans-serif;color:#222;letter-spacing:-0.351px;">Удалить</span>
<svg class=b style="left:1156.0px;top:86.0px" width="5" height="3" viewBox="0 0 5 3"><path d="M0 0H5L2.5 3Z" fill="#666b73"/></svg>
<svg class=b style="left:1089px;top:101px" width="17" height="16" viewBox="0 0 17 16"><path d="M2 0V3M5 0V3M8 0V3M11 0V3M14 0V3" stroke="#333" stroke-width="1" /><rect x=".5" y="2.5" width="15" height="13" fill="#fff" stroke="#5c6675" stroke-width=".9"/><path d="M.5 6.5H15.5M.5 11.5H15.5M4.5 2.5V15.5M11.5 2.5V15.5" stroke="#8b96a8" stroke-width=".8"/><rect x="5" y="7" width="6" height="4" fill="#6a9bea"/></svg>
<span class=t style="left:1109.00px;top:101.80px;font:normal normal 11.5px/15px 'Liberation Sans',sans-serif;color:#222;letter-spacing:-0.312px;">Формат</span>
<svg class=b style="left:1153.1px;top:108.0px" width="5" height="3" viewBox="0 0 5 3"><path d="M0 0H5L2.5 3Z" fill="#666b73"/></svg>
<span class=t style="left:1108.50px;top:122.00px;font:normal normal 11.5px/15px 'Liberation Sans',sans-serif;color:#6c6f7a;letter-spacing:0.124px;">Ячейки</span>
<span class=t style="left:1184.30px;top:55.80px;font:normal bold 14px/18px 'Liberation Serif',serif;color:#111;letter-spacing:2.044px;">Σ</span>
<svg class=b style="left:1202.0px;top:64.0px" width="5" height="3" viewBox="0 0 5 3"><path d="M0 0H5L2.5 3Z" fill="#666b73"/></svg>
<svg class=b style="left:1183px;top:79px" width="13" height="16" viewBox="0 0 13 16"><rect x=".5" y=".5" width="12" height="15" fill="#eaf1fc" stroke="#5f86c8"/><rect x="1" y="1" width="11" height="3" fill="#b6cdf0"/><path d="M4.7 5H8.3V9H11L6.5 13.6 2 9H4.7Z" fill="#2f67cf" stroke="#1f4aa3" stroke-width=".5"/></svg>
<svg class=b style="left:1200.5px;top:86.0px" width="5" height="3" viewBox="0 0 5 3"><path d="M0 0H5L2.5 3Z" fill="#666b73"/></svg>
<svg class=b style="left:1183px;top:102px" width="16" height="13" viewBox="0 0 16 13"><path d="M6.5 1L14.5 1.5 9 9.5 1 8.5Z" fill="#fdfdfd" stroke="#6b7380" stroke-width=".8" stroke-linejoin="round"/><path d="M1 8.5L9 9.5 8.5 11.3 .8 10.2Z" fill="#dfe3ea" stroke="#6b7380" stroke-width=".7"/><path d="M2 12.5H13" stroke="#222" stroke-width="1"/></svg>
<svg class=b style="left:1200.5px;top:107.5px" width="5" height="3" viewBox="0 0 5 3"><path d="M0 0H5L2.5 3Z" fill="#666b73"/></svg>
<span class=t style="left:1231.50px;top:54.00px;font:normal bold 17px/22px 'Liberation Serif',serif;color:#3b63b6;">А</span>
<span class=t style="left:1231.00px;top:69.50px;font:normal bold 16px/21px 'Liberation Serif',serif;color:#9a2f2f;">Я</span>
<svg class=b style="left:1242px;top:62px" width="19" height="23" viewBox="0 0 19 23"><defs><linearGradient id="fg" x1="0" x2="1"><stop offset="0" stop-color="#8d9095"/><stop offset=".5" stop-color="#d6d8dc"/><stop offset="1" stop-color="#8d9095"/></linearGradient></defs><path d="M.5 1.500H18.500L11.800 10V21L6.800 22.500V10Z" fill="url(#fg)" stroke="#75787e" stroke-width=".6"/><ellipse cx="9.500" cy="1.800" rx="9" ry="1.300" fill="#b9bcc1" stroke="#75787e" stroke-width=".5"/></svg>
<span class=t style="left:1213.70px;top:91.80px;font:normal normal 11.5px/15px 'Liberation Sans',sans-serif;color:#222;letter-spacing:0.064px;">Сортировка</span>
<span class=t style="left:1216.40px;top:104.80px;font:normal normal 11.5px/15px 'Liberation Sans',sans-serif;color:#222;letter-spacing:-0.055px;">и фильтр</span>
<svg class=b style="left:1269.0px;top:110.2px" width="5" height="3" viewBox="0 0 5 3"><path d="M0 0H5L2.5 3Z" fill="#666b73"/></svg>
<svg class=b style="left:1296px;top:59px" width="29" height="26" viewBox="0 0 29 26"><defs><linearGradient id="bg" x1="0" x2="1"><stop offset="0" stop-color="#4d69a3"/><stop offset=".4" stop-color="#a9bbdf"/><stop offset="1" stop-color="#3f5a96"/></linearGradient></defs><rect x="5" y="1" width="6" height="7" rx="2" fill="url(#bg)" stroke="#3f5a94" stroke-width=".5"/><rect x="18" y="1" width="6" height="7" rx="2" fill="url(#bg)" stroke="#3f5a94" stroke-width=".5"/><path d="M4 7H12L13 24H1Z" fill="url(#bg)" stroke="#3f5a94" stroke-width=".5"/><path d="M17 7H25L28 24H16Z" fill="url(#bg)" stroke="#3f5a94" stroke-width=".5"/><rect x="11.5" y="10" width="6" height="7" fill="#5672ad"/><ellipse cx="7" cy="24" rx="6" ry="1.6" fill="#3d588f"/><ellipse cx="22" cy="24" rx="6" ry="1.6" fill="#3d588f"/></svg>
<span class=t style="left:1290.70px;top:91.80px;font:normal normal 11.5px/15px 'Liberation Sans',sans-serif;color:#222;letter-spacing:-0.023px;">Найти и</span>
<span class=t style="left:1283.60px;top:104.80px;font:normal normal 11.5px/15px 'Liberation Sans',sans-serif;color:#222;letter-spacing:-0.371px;">выделить</span>
<svg class=b style="left:1336.1px;top:110.2px" width="5" height="3" viewBox="0 0 5 3"><path d="M0 0H5L2.5 3Z" fill="#666b73"/></svg>
<span class=t style="left:1217.40px;top:122.00px;font:normal normal 11.5px/15px 'Liberation Sans',sans-serif;color:#6c6f7a;letter-spacing:-0.008px;">Редактирование</span>
<div class=b style="left:14px;top:142px;width:1344px;height:40px;background:#dfe3e8"></div>
<div class=b style="left:14px;top:142px;width:166px;height:20px;background:#fff"></div>
<div class=b style="left:14px;top:162px;width:244px;height:1px;background:#cdd1d7"></div>
<div class=b style="left:174px;top:141px;width:84px;height:22px;background:#dfe3e8;border-radius:11px 0 0 11px;border:1px solid #aeb3bc;border-right:0"></div>
<div class=b style="left:180px;top:147px;width:8px;height:8px;border-radius:50%;background:radial-gradient(circle at 45% 40%,#ffffff 0,#e3e6ea 30%,#b4b9c1 65%,#9499a2 100%)"></div>
<span class=t style="left:66.50px;top:143.80px;font:normal normal 13px/17px 'Liberation Sans',sans-serif;color:#111;letter-spacing:-0.503px;">D5477</span>
<svg class=b style="left:161.0px;top:150.5px" width="7" height="4" viewBox="0 0 7 4"><path d="M0 0H7L3.5 4Z" fill="#222"/></svg>
<span class=t style="left:242.00px;top:143.50px;font:italic bold 13px/17px 'Liberation Serif',serif;color:#222;">f</span>
<span class=t style="left:246.50px;top:148.00px;font:italic bold 9px/12px 'Liberation Serif',serif;color:#222;">x</span>
<div class=b style="left:258px;top:142px;width:1084px;height:40px;background:#fff;border-left:1px solid #c6cad1"></div>
<span class=t style="left:266.00px;top:144.00px;font:normal normal 13.4px/17px 'Liberation Sans',sans-serif;color:#111;letter-spacing:0.278px;">Открыт прием заявок</span>
<div class=b style="left:1342px;top:142px;width:16px;height:40px;background:linear-gradient(90deg,#e9ecf0,#dde1e7)"></div>
<div class=b style="left:1342px;top:160px;width:16px;height:1px;background:#c3c7ce"></div>
<svg class=b style="left:1346px;top:147px" width="8" height="6" viewBox="0 0 8 6"><path d="M1 5L4 2 7 5" fill="none" stroke="#333" stroke-width="1.6"/></svg>
<svg class=b style="left:1345.5px;top:165px" width="9" height="5" viewBox="0 0 9 5"><path d="M0 5H9L4.5 0Z" fill="#8a9099"/></svg>
<svg class=b style="left:1345.5px;top:174px" width="9" height="5" viewBox="0 0 9 5"><path d="M0 0H9L4.5 5Z" fill="#8a9099"/></svg>
<div class=b style="left:14px;top:182px;width:1344px;height:1px;background:#9ea3ab"></div>
<div class=b style="left:14px;top:183px;width:1344px;height:3px;background:#f4f5f7"></div>
<div class=b style="left:14px;top:186px;width:1344px;height:1px;background:#a4a9b1"></div>
<div class=b style="left:14px;top:187px;width:1328px;height:495px;background:#fff"></div>
<div class=b style="left:14px;top:187px;width:1328px;height:20px;background:linear-gradient(180deg,#e6e9ed 0,#dde1e6 100%)"></div>
<div class=b style="left:14px;top:207px;width:33px;height:475px;background:#e1e4e9"></div>
<div class=b style="left:46px;top:207px;width:1px;height:475px;background:#d6d8dc"></div>
<div class=b style="left:46px;top:187px;width:1px;height:20px;background:#b3b8c0"></div>
<div class=b style="left:110px;top:207px;width:1px;height:475px;background:#d6d8dc"></div>
<div class=b style="left:110px;top:187px;width:1px;height:20px;background:#b3b8c0"></div>
<div class=b style="left:270px;top:207px;width:1px;height:475px;background:#d6d8dc"></div>
<div class=b style="left:270px;top:187px;width:1px;height:20px;background:#b3b8c0"></div>
<div class=b style="left:445px;top:207px;width:1px;height:475px;background:#d6d8dc"></div>
<div class=b style="left:445px;top:187px;width:1px;height:20px;background:#b3b8c0"></div>
<div class=b style="left:558px;top:207px;width:1px;height:475px;background:#d6d8dc"></div>
<div class=b style="left:558px;top:187px;width:1px;height:20px;background:#b3b8c0"></div>
<div class=b style="left:689px;top:207px;width:1px;height:475px;background:#d6d8dc"></div>
<div class=b style="left:689px;top:187px;width:1px;height:20px;background:#b3b8c0"></div>
<div class=b style="left:1224px;top:207px;width:1px;height:475px;background:#d6d8dc"></div>
<div class=b style="left:1224px;top:187px;width:1px;height:20px;background:#b3b8c0"></div>
<div class=b style="left:1331px;top:207px;width:1px;height:475px;background:#d6d8dc"></div>
<div class=b style="left:1331px;top:187px;width:1px;height:20px;background:#b3b8c0"></div>
<div class=b style="left:47px;top:274px;width:1295px;height:1px;background:#d6d8dc"></div>
<div class=b style="left:14px;top:274px;width:33px;height:1px;background:#b3b8c0"></div>
<div class=b style="left:47px;top:342px;width:1295px;height:1px;background:#d6d8dc"></div>
<div class=b style="left:14px;top:342px;width:33px;height:1px;background:#b3b8c0"></div>
<div class=b style="left:47px;top:376px;width:1295px;height:1px;background:#d6d8dc"></div>
<div class=b style="left:14px;top:376px;width:33px;height:1px;background:#b3b8c0"></div>
<div class=b style="left:47px;top:427px;width:1295px;height:1px;background:#d6d8dc"></div>
<div class=b style="left:14px;top:427px;width:33px;height:1px;background:#b3b8c0"></div>
<div class=b style="left:47px;top:597px;width:1295px;height:1px;background:#d6d8dc"></div>
<div class=b style="left:14px;top:597px;width:33px;height:1px;background:#b3b8c0"></div>
<div class=b style="left:47px;top:631px;width:1295px;height:1px;background:#d6d8dc"></div>
<div class=b style="left:14px;top:631px;width:33px;height:1px;background:#b3b8c0"></div>
<div class=b style="left:47px;top:665px;width:1295px;height:1px;background:#d6d8dc"></div>
<div class=b style="left:14px;top:665px;width:33px;height:1px;background:#b3b8c0"></div>
<div class=b style="left:14px;top:206px;width:1328px;height:1px;background:#b3b8c0"></div>
<div class=b style="left:46px;top:207px;width:1px;height:475px;background:#b3b8c0"></div>
<svg class=b style="left:31px;top:192px" width="12" height="11" viewBox="0 0 12 11"><path d="M11.5 0V10.5H0Z" fill="#bfc4cb"/></svg>
<div class=b style="left:271px;top:187px;width:174px;height:20px;background:linear-gradient(180deg,#f8d26c 0,#fdd96c 35%,#fbd05a 70%,#f4bf45 100%);border-bottom:1px solid #e3a83a"></div>
<div class=b style="left:270px;top:187px;width:1px;height:20px;background:#e8b84a"></div>
<div class=b style="left:445px;top:187px;width:1px;height:20px;background:#e8b84a"></div>
<div class=b style="left:14px;top:428px;width:32px;height:169px;background:linear-gradient(90deg,#fedb68,#fdd45c)"></div>
<div class=b style="left:46px;top:428px;width:1px;height:169px;background:#e0a030"></div>
<span class=t style="left:74.49px;top:189.00px;font:normal normal 12px/16px 'Liberation Sans',sans-serif;color:#222;">B</span>
<span class=t style="left:186.36px;top:189.00px;font:normal normal 12px/16px 'Liberation Sans',sans-serif;color:#222;">C</span>
<span class=t style="left:353.66px;top:189.00px;font:normal normal 12px/16px 'Liberation Sans',sans-serif;color:#222;">D</span>
<span class=t style="left:497.99px;top:189.00px;font:normal normal 12px/16px 'Liberation Sans',sans-serif;color:#222;">E</span>
<span class=t style="left:620.33px;top:189.00px;font:normal normal 12px/16px 'Liberation Sans',sans-serif;color:#222;">F</span>
<span class=t style="left:952.33px;top:189.00px;font:normal normal 12px/16px 'Liberation Sans',sans-serif;color:#222;">G</span>
<span class=t style="left:1273.66px;top:189.00px;font:normal normal 12px/16px 'Liberation Sans',sans-serif;color:#222;">H</span>
<span class=t style="left:16.00px;top:258.00px;font:normal normal 13px/17px 'Liberation Sans',sans-serif;color:#222;letter-spacing:-0.307px;">5473</span>
<span class=t style="left:16.00px;top:326.00px;font:normal normal 13px/17px 'Liberation Sans',sans-serif;color:#222;letter-spacing:-0.307px;">5474</span>
<span class=t style="left:16.00px;top:360.00px;font:normal normal 13px/17px 'Liberation Sans',sans-serif;color:#222;letter-spacing:-0.307px;">5475</span>
<span class=t style="left:16.00px;top:411.00px;font:normal normal 13px/17px 'Liberation Sans',sans-serif;color:#222;letter-spacing:-0.307px;">5476</span>
<span class=t style="left:16.00px;top:581.00px;font:normal normal 13px/17px 'Liberation Sans',sans-serif;color:#222;letter-spacing:-0.307px;">5477</span>
<span class=t style="left:16.00px;top:615.00px;font:normal normal 13px/17px 'Liberation Sans',sans-serif;color:#222;letter-spacing:-0.307px;">5478</span>
<span class=t style="left:16.00px;top:649.00px;font:normal normal 13px/17px 'Liberation Sans',sans-serif;color:#222;letter-spacing:-0.307px;">5479</span>
<span class=t style="left:53.20px;top:207.70px;font:normal normal 12.7px/17px 'Liberation Sans',sans-serif;color:#000;letter-spacing:-0.103px;transform:scaleY(1.1)">38 445</span>
<span class=t style="left:117.00px;top:207.70px;font:normal normal 12.7px/17px 'Liberation Sans',sans-serif;color:#000;letter-spacing:0.049px;transform:scaleY(1.1)">Публичное предложение</span>
<span class=t style="left:276.80px;top:207.70px;font:normal normal 12.7px/17px 'Liberation Sans',sans-serif;color:#000;letter-spacing:0.066px;transform:scaleY(1.1)">Открыт прием заявок</span>
<span class=t style="left:451.60px;top:207.70px;font:normal normal 12.7px/17px 'Liberation Sans',sans-serif;color:#000;letter-spacing:0.144px;transform:scaleY(1.1)">27.12.2011 00:00</span>
<span class=t style="left:565.00px;top:207.70px;font:normal normal 12.7px/17px 'Liberation Sans',sans-serif;color:#000;letter-spacing:0.081px;transform:scaleY(1.1)">01.01.2012 00:00</span>
<span class=t style="left:1227.60px;top:207.70px;font:normal normal 12.7px/17px 'Liberation Sans',sans-serif;color:#000;letter-spacing:-0.011px;transform:scaleY(1.1)">538 020,00</span>
<span class=t style="left:53.20px;top:275.70px;font:normal normal 12.7px/17px 'Liberation Sans',sans-serif;color:#000;letter-spacing:-0.103px;transform:scaleY(1.1)">29 238</span>
<span class=t style="left:117.00px;top:275.70px;font:normal normal 12.7px/17px 'Liberation Sans',sans-serif;color:#000;letter-spacing:0.049px;transform:scaleY(1.1)">Публичное предложение</span>
<span class=t style="left:276.80px;top:275.70px;font:normal normal 12.7px/17px 'Liberation Sans',sans-serif;color:#000;letter-spacing:0.066px;transform:scaleY(1.1)">Открыт прием заявок</span>
<span class=t style="left:451.60px;top:275.70px;font:normal normal 12.7px/17px 'Liberation Sans',sans-serif;color:#000;letter-spacing:0.207px;transform:scaleY(1.1)">20.11.2011 00:00</span>
<span class=t style="left:565.00px;top:275.70px;font:normal normal 12.7px/17px 'Liberation Sans',sans-serif;color:#000;letter-spacing:0.081px;transform:scaleY(1.1)">25.03.2012 00:00</span>
<span class=t style="left:1227.60px;top:275.70px;font:normal normal 12.7px/17px 'Liberation Sans',sans-serif;color:#000;letter-spacing:-0.011px;transform:scaleY(1.1)">540 000,00</span>
<span class=t style="left:53.20px;top:343.70px;font:normal normal 12.7px/17px 'Liberation Sans',sans-serif;color:#000;letter-spacing:-0.103px;transform:scaleY(1.1)">42 288</span>
<span class=t style="left:117.00px;top:343.70px;font:normal normal 12.7px/17px 'Liberation Sans',sans-serif;color:#000;letter-spacing:0.049px;transform:scaleY(1.1)">Публичное предложение</span>
<span class=t style="left:276.80px;top:343.70px;font:normal normal 12.7px/17px 'Liberation Sans',sans-serif;color:#000;letter-spacing:0.066px;transform:scaleY(1.1)">Открыт прием заявок</span>
<span class=t style="left:451.60px;top:343.70px;font:normal normal 12.7px/17px 'Liberation Sans',sans-serif;color:#000;letter-spacing:0.081px;transform:scaleY(1.1)">25.01.2012 00:00</span>
<span class=t style="left:565.00px;top:343.70px;font:normal normal 12.7px/17px 'Liberation Sans',sans-serif;color:#000;letter-spacing:0.081px;transform:scaleY(1.1)">24.09.2012 14:00</span>
<span class=t style="left:1227.60px;top:343.70px;font:normal normal 12.7px/17px 'Liberation Sans',sans-serif;color:#000;letter-spacing:-0.011px;transform:scaleY(1.1)">540 000,00</span>
<span class=t style="left:53.20px;top:377.70px;font:normal normal 12.7px/17px 'Liberation Sans',sans-serif;color:#000;letter-spacing:-0.103px;transform:scaleY(1.1)">29 286</span>
<span class=t style="left:117.00px;top:377.70px;font:normal normal 12.7px/17px 'Liberation Sans',sans-serif;color:#000;letter-spacing:0.049px;transform:scaleY(1.1)">Публичное предложение</span>
<span class=t style="left:276.80px;top:377.70px;font:normal normal 12.7px/17px 'Liberation Sans',sans-serif;color:#000;letter-spacing:0.066px;transform:scaleY(1.1)">Открыт прием заявок</span>
<span class=t style="left:451.60px;top:377.70px;font:normal normal 12.7px/17px 'Liberation Sans',sans-serif;color:#000;letter-spacing:0.207px;transform:scaleY(1.1)">21.11.2011 10:00</span>
<span class=t style="left:565.00px;top:377.70px;font:normal normal 12.7px/17px 'Liberation Sans',sans-serif;color:#000;letter-spacing:0.144px;transform:scaleY(1.1)">28.12.2011 16:00</span>
<span class=t style="left:1227.60px;top:377.70px;font:normal normal 12.7px/17px 'Liberation Sans',sans-serif;color:#000;letter-spacing:-0.011px;transform:scaleY(1.1)">542 520,00</span>
<span class=t style="left:53.20px;top:428.70px;font:normal normal 12.7px/17px 'Liberation Sans',sans-serif;color:#000;letter-spacing:-0.103px;transform:scaleY(1.1)">44 514</span>
<span class=t style="left:117.00px;top:428.70px;font:normal normal 12.7px/17px 'Liberation Sans',sans-serif;color:#000;letter-spacing:0.049px;transform:scaleY(1.1)">Публичное предложение</span>
<span class=t style="left:276.80px;top:428.70px;font:normal normal 12.7px/17px 'Liberation Sans',sans-serif;color:#000;letter-spacing:0.066px;transform:scaleY(1.1)">Открыт прием заявок</span>
<span class=t style="left:451.60px;top:428.70px;font:normal normal 12.7px/17px 'Liberation Sans',sans-serif;color:#000;letter-spacing:0.081px;transform:scaleY(1.1)">30.01.2012 09:00</span>
<span class=t style="left:565.00px;top:428.70px;font:normal normal 12.7px/17px 'Liberation Sans',sans-serif;color:#000;letter-spacing:0.081px;transform:scaleY(1.1)">21.09.2013 18:00</span>
<span class=t style="left:1227.60px;top:428.70px;font:normal normal 12.7px/17px 'Liberation Sans',sans-serif;color:#000;letter-spacing:-0.011px;transform:scaleY(1.1)">544 500,00</span>
<span class=t style="left:53.20px;top:598.70px;font:normal normal 12.7px/17px 'Liberation Sans',sans-serif;color:#000;letter-spacing:-0.103px;transform:scaleY(1.1)">10 981</span>
<span class=t style="left:117.00px;top:598.70px;font:normal normal 12.7px/17px 'Liberation Sans',sans-serif;color:#000;letter-spacing:0.049px;transform:scaleY(1.1)">Публичное предложение</span>
<span class=t style="left:276.80px;top:598.70px;font:normal normal 12.7px/17px 'Liberation Sans',sans-serif;color:#000;letter-spacing:0.066px;transform:scaleY(1.1)">Открыт прием заявок</span>
<span class=t style="left:451.60px;top:598.70px;font:normal normal 12.7px/17px 'Liberation Sans',sans-serif;color:#000;letter-spacing:0.144px;transform:scaleY(1.1)">15.08.2011 09:00</span>
<span class=t style="left:565.00px;top:598.70px;font:normal normal 12.7px/17px 'Liberation Sans',sans-serif;color:#000;letter-spacing:0.207px;transform:scaleY(1.1)">23.11.2011 17:00</span>
<span class=t style="left:1227.60px;top:598.70px;font:normal normal 12.7px/17px 'Liberation Sans',sans-serif;color:#000;letter-spacing:-0.011px;transform:scaleY(1.1)">546 750,00</span>
<span class=t style="left:53.20px;top:632.70px;font:normal normal 12.7px/17px 'Liberation Sans',sans-serif;color:#000;letter-spacing:-0.103px;transform:scaleY(1.1)">10 981</span>
<span class=t style="left:117.00px;top:632.70px;font:normal normal 12.7px/17px 'Liberation Sans',sans-serif;color:#000;letter-spacing:0.049px;transform:scaleY(1.1)">Публичное предложение</span>
<span class=t style="left:276.80px;top:632.70px;font:normal normal 12.7px/17px 'Liberation Sans',sans-serif;color:#000;letter-spacing:0.066px;transform:scaleY(1.1)">Открыт прием заявок</span>
<span class=t style="left:451.60px;top:632.70px;font:normal normal 12.7px/17px 'Liberation Sans',sans-serif;color:#000;letter-spacing:0.144px;transform:scaleY(1.1)">15.08.2011 09:00</span>
<span class=t style="left:565.00px;top:632.70px;font:normal normal 12.7px/17px 'Liberation Sans',sans-serif;color:#000;letter-spacing:0.207px;transform:scaleY(1.1)">23.11.2011 17:00</span>
<span class=t style="left:1227.60px;top:632.70px;font:normal normal 12.7px/17px 'Liberation Sans',sans-serif;color:#000;letter-spacing:-0.011px;transform:scaleY(1.1)">546 750,00</span>
<span class=t style="left:53.20px;top:666.70px;font:normal normal 12.7px/17px 'Liberation Sans',sans-serif;color:#000;letter-spacing:-0.103px;transform:scaleY(1.1)">53 827</span>
<span class=t style="left:117.00px;top:666.70px;font:normal normal 12.7px/17px 'Liberation Sans',sans-serif;color:#000;letter-spacing:0.049px;transform:scaleY(1.1)">Публичное предложение</span>
<span class=t style="left:276.80px;top:666.70px;font:normal normal 12.7px/17px 'Liberation Sans',sans-serif;color:#000;letter-spacing:0.066px;transform:scaleY(1.1)">Открыт прием заявок</span>
<span class=t style="left:451.60px;top:666.70px;font:normal normal 12.7px/17px 'Liberation Sans',sans-serif;color:#000;letter-spacing:0.081px;transform:scaleY(1.1)">20.03.2012 10:00</span>
<span class=t style="left:565.00px;top:666.70px;font:normal normal 12.7px/17px 'Liberation Sans',sans-serif;color:#000;letter-spacing:0.081px;transform:scaleY(1.1)">29.05.2012 10:00</span>
<span class=t style="left:1227.60px;top:666.70px;font:normal normal 12.7px/17px 'Liberation Sans',sans-serif;color:#000;letter-spacing:-0.011px;transform:scaleY(1.1)">554 220,00</span>
<span class=t style="left:704.30px;top:224.70px;font:normal normal 12.7px/17px 'Liberation Sans',sans-serif;color:#000;letter-spacing:0.181px;transform:scaleY(1.1)">Автомобиль Mercedes-Benz Sprinter 313 CDI, 2006 г.в.; грузовой - Фургон, категория</span>
<span class=t style="left:692.50px;top:241.70px;font:normal normal 12.7px/17px 'Liberation Sans',sans-serif;color:#000;letter-spacing:0.232px;transform:scaleY(1.1)">В, цвет белый; мощн. двиг. 129 л.с./95 кВт; объем двиг. 2148 куб. см, ПТС серии 77 ТН</span>
<span class=t style="left:692.50px;top:258.70px;font:normal normal 12.7px/17px 'Liberation Sans',sans-serif;color:#000;letter-spacing:-0.112px;transform:scaleY(1.1)">835797.</span>
<span class=t style="left:704.30px;top:292.70px;font:normal normal 12.7px/17px 'Liberation Sans',sans-serif;color:#000;letter-spacing:0.133px;transform:scaleY(1.1)">Ознакомиться с правилами торгов и характеристиками лотов по адресу: 400074, г.</span>
<span class=t style="left:692.50px;top:309.70px;font:normal normal 12.7px/17px 'Liberation Sans',sans-serif;color:#000;letter-spacing:0.213px;transform:scaleY(1.1)">Волгоград, ул. Рабоче-Крестьянская, д. 30 оф. 605, с 10 до 16 часов в рабочие дни,</span>
<span class=t style="left:692.50px;top:326.70px;font:normal normal 12.7px/17px 'Liberation Sans',sans-serif;color:#000;letter-spacing:0.097px;transform:scaleY(1.1)">предварительно позвонив по тел. (8442) 96-46-48, e-mail: a004et@mail.ru.</span>
<span class=t style="left:704.30px;top:360.70px;font:normal normal 12.7px/17px 'Liberation Sans',sans-serif;color:#000;letter-spacing:0.077px;transform:scaleY(1.1)">Права требования к должникам банка</span>
<span class=t style="left:704.30px;top:394.70px;font:normal normal 12.7px/17px 'Liberation Sans',sans-serif;color:#000;letter-spacing:0.115px;transform:scaleY(1.1)">задолженность 65 человек в сумме 2302019,53 руб. Ознакомиться с информацией о</span>
<span class=t style="left:692.50px;top:411.70px;font:normal normal 12.7px/17px 'Liberation Sans',sans-serif;color:#000;letter-spacing:0.027px;transform:scaleY(1.1)">лотах можно по тел. (8442) 23-69-05, 8-927-251-46-47 руб</span>
<span class=t style="left:704.30px;top:445.70px;font:normal normal 12.7px/17px 'Liberation Sans',sans-serif;color:#000;letter-spacing:0.089px;transform:scaleY(1.1)">Одноэтажный коровник, условный номер 56-56-33/004/2008-456,  расположенный по</span>
<span class=t style="left:692.50px;top:462.70px;font:normal normal 12.7px/17px 'Liberation Sans',sans-serif;color:#000;letter-spacing:0.156px;transform:scaleY(1.1)">адресу: Оренбургская область, Сорочинский район, село Новобелогорка,</span>
<span class=t style="left:692.50px;top:479.70px;font:normal normal 12.7px/17px 'Liberation Sans',sans-serif;color:#000;letter-spacing:0.162px;transform:scaleY(1.1)">ул.Центральная, корпус 1/5.</span>
<span class=t style="left:692.50px;top:496.70px;font:normal normal 12.7px/17px 'Liberation Sans',sans-serif;color:#000;letter-spacing:0.128px;transform:scaleY(1.1)">Земельный участок, на котором расположено здание, кадастровый (условный) номер</span>
<span class=t style="left:692.50px;top:513.70px;font:normal normal 12.7px/17px 'Liberation Sans',sans-serif;color:#000;letter-spacing:0.144px;transform:scaleY(1.1)">56:30:1001001:202,   расположенный по адресу:...</span>
<span class=t style="left:704.30px;top:530.70px;font:normal normal 12.7px/17px 'Liberation Sans',sans-serif;color:#000;letter-spacing:0.226px;transform:scaleY(1.1)">&lt;a id=&quot;ctl00_cphBody_rptLotList_ctl00_HyperLink1&quot;</span>
<span class=t style="left:692.50px;top:547.70px;font:normal normal 12.7px/17px 'Liberation Sans',sans-serif;color:#000;letter-spacing:0.098px;transform:scaleY(1.1)">onclick=&quot;openNewWin(&#x27;/TradeLotInfo.aspx?ID=159628&amp;amp;type=TradeObject&#x27;,</span>
<span class=t style="left:692.50px;top:564.70px;font:normal normal 12.7px/17px 'Liberation Sans',sans-serif;color:#000;letter-spacing:0.148px;transform:scaleY(1.1)">&#x27;Сообщение&#x27;, &#x27;yes&#x27;, &#x27;600&#x27;, &#x27;600&#x27;); return false&quot; href=&quot;#&quot; style=&quot;display: block; text-align:</span>
<span class=t style="left:692.50px;top:581.70px;font:normal normal 12.7px/17px 'Liberation Sans',sans-serif;color:#000;letter-spacing:0.199px;transform:scaleY(1.1)">right&quot;&gt;подробнее...&lt;/a&gt;</span>
<span class=t style="left:704.30px;top:615.70px;font:normal normal 12.7px/17px 'Liberation Sans',sans-serif;color:#000;letter-spacing:0.141px;transform:scaleY(1.1)">Лот №411. Автопогрузчик БВ 2753-33-6(№инв.870699).</span>
<span class=t style="left:704.30px;top:649.70px;font:normal normal 12.7px/17px 'Liberation Sans',sans-serif;color:#000;letter-spacing:0.141px;transform:scaleY(1.1)">Лот №411. Автопогрузчик БВ 2753-33-6(№инв.870699).</span>
<div class=b style="left:269px;top:426px;width:178px;height:173px;border:3px solid #000"></div>
<div class=b style="left:443px;top:595px;width:6px;height:6px;background:#000;border:1px solid #fff;border-right:0;border-bottom:0;left:442px;top:594px;width:6px;height:6px"></div>
<div class=b style="left:1342px;top:187px;width:16px;height:495px;background:linear-gradient(90deg,#e8ebef 0,#dfe3e9 50%,#d9dde4 100%)"></div>
<div class=b style="left:1343px;top:188px;width:14px;height:7px;background:#fff;border:1px solid #7f848c"></div>
<div class=b style="left:1346px;top:190px;width:8px;height:1px;background:#555"></div>
<svg class=b style="left:1345px;top:201px" width="10" height="5" viewBox="0 0 10 5"><path d="M0 5H10L5 0Z" fill="#3c4046"/></svg>
<div class=b style="left:1342px;top:595px;width:15px;height:17px;background:linear-gradient(90deg,#f6f7f9,#e4e7ec);border:1px solid #8d929b;border-radius:1px"></div>
<div class=b style="left:1346px;top:600.5px;width:8px;height:1px;background:#6c727c"></div>
<div class=b style="left:1346px;top:602.5px;width:8px;height:1px;background:#6c727c"></div>
<div class=b style="left:1346px;top:604.5px;width:8px;height:1px;background:#6c727c"></div>
<div class=b style="left:1346px;top:606.5px;width:8px;height:1px;background:#6c727c"></div>
<svg class=b style="left:1344.7px;top:671px" width="10" height="5" viewBox="0 0 10 5"><path d="M0 0H10L5 5Z" fill="#3c4046"/></svg>
<div class=b style="left:14px;top:682px;width:1344px;height:16px;background:linear-gradient(180deg,#b4b8c0 0,#d3d7dd 1px,#d8dbe1 100%)"></div>
<svg class=b style="left:20px;top:686.5px" width="7" height="7" viewBox="0 0 8 8"><rect x="0" y="0" width="1.4" height="8" fill="#3c4046"/><path d="M7.5 0V8L2.5 4Z" fill="#3c4046"/></svg>
<svg class=b style="left:35.5px;top:686.5px" width="5" height="7" viewBox="0 0 6 8"><path d="M5.5 0V8L.5 4Z" fill="#3c4046"/></svg>
<svg class=b style="left:49.5px;top:686.5px" width="5" height="7" viewBox="0 0 6 8"><path d="M.5 0V8L5.5 4Z" fill="#3c4046"/></svg>
<svg class=b style="left:63.5px;top:686.5px" width="7" height="7" viewBox="0 0 8 8"><rect x="6.6" y="0" width="1.4" height="8" fill="#3c4046"/><path d="M.5 0V8L5.5 4Z" fill="#3c4046"/></svg>
<svg class=b style="left:70px;top:682px" width="260" height="16" viewBox="0 0 260 16"><defs><linearGradient id="tg" x1="0" y1="0" x2="0" y2="1"><stop offset="0" stop-color="#eceef1"/><stop offset="1" stop-color="#d6dade"/></linearGradient></defs><path d="M218 14.5H242L250.5 0H218Z" fill="url(#tg)" stroke="#8f949c"/><path d="M113 0V13Q113 14.5 114.5 14.5H165L172.5 0Z" fill="url(#tg)" stroke="#8f949c"/><path d="M59 0V13Q59 14.5 60.5 14.5H113L120.5 0Z" fill="url(#tg)" stroke="#8f949c"/><path d="M7.5 0V13Q7.5 14.5 9 14.5H59L66.5 0Z" fill="url(#tg)" stroke="#8f949c"/><path d="M165.5 -1V13Q165.5 14.5 167 14.5H218L226 -1Z" fill="#fff" stroke="#7e838b"/><rect x="233.500" y="4.500" width="9" height="7" rx="1" fill="#fff" stroke="#5f6f9f" stroke-width=".9"/><path d="M233 1.500V7.500M230 4.500H236M231 2.500L235 6.500M235 2.500L231 6.500" stroke="#e9a800" stroke-width="1"/></svg>
<span class=t style="left:87.00px;top:681.50px;font:normal normal 13px/17px 'Liberation Sans',sans-serif;color:#555b64;letter-spacing:-0.621px;">Лист1</span>
<span class=t style="left:140.00px;top:681.50px;font:normal normal 13px/17px 'Liberation Sans',sans-serif;color:#555b64;letter-spacing:-0.621px;">Лист2</span>
<span class=t style="left:193.00px;top:681.50px;font:normal normal 13px/17px 'Liberation Sans',sans-serif;color:#555b64;letter-spacing:-0.621px;">Лист3</span>
<span class=t style="left:245.00px;top:681.50px;font:normal bold 13px/17px 'Liberation Sans',sans-serif;color:#222;letter-spacing:-0.488px;">Лист4</span>
<div class=b style="left:811px;top:683px;width:8px;height:14px;background:#fff;border:1px solid #7f848c"></div>
<div class=b style="left:814.5px;top:686px;width:1px;height:8px;background:#555"></div>
<svg class=b style="left:824px;top:686px" width="5" height="8" viewBox="0 0 5 8"><path d="M5 0V8L0 4Z" fill="#3c4046"/></svg>
<div class=b style="left:896px;top:683px;width:421px;height:14px;background:linear-gradient(180deg,#f7f8fa 0,#e8ebef 50%,#dfe3e8 100%);border:1px solid #a3a8b1;border-radius:2px"></div>
<div class=b style="left:1102px;top:687px;width:1px;height:7px;background:#8a9099"></div>
<div class=b style="left:1104px;top:687px;width:1px;height:7px;background:#8a9099"></div>
<div class=b style="left:1106px;top:687px;width:1px;height:7px;background:#8a9099"></div>
<div class=b style="left:1108px;top:687px;width:1px;height:7px;background:#8a9099"></div>
<svg class=b style="left:1323px;top:686px" width="5" height="8" viewBox="0 0 5 8"><path d="M0 0V8L5 4Z" fill="#3c4046"/></svg>
<div class=b style="left:1334px;top:683px;width:8px;height:14px;background:#fff;border:1px solid #7f848c"></div>
<div class=b style="left:1337.5px;top:686px;width:1px;height:8px;background:#555"></div>
<div class=b style="left:1342px;top:682px;width:16px;height:16px;background:#dfe3e8"></div>
<div class=b style="left:14px;top:698px;width:1344px;height:22px;background:linear-gradient(180deg,#9da1a9 0,#f0f1f4 1px,#e2e5e9 2px,#dde0e5 10px,#cdd1d7 11px,#c9cdd4 100%)"></div>
<span class=t style="left:22.00px;top:701.80px;font:normal normal 11.5px/15px 'Liberation Sans',sans-serif;color:#333;letter-spacing:0.297px;">Готово</span>
<div class=b style="left:70px;top:700px;width:1px;height:19px;background:#aeb3bb"></div>
<div class=b style="left:71px;top:700px;width:1px;height:19px;background:#f2f3f5"></div>
<div class=b style="left:1105px;top:699px;width:20px;height:20px;border:1px solid #d3a53f;border-radius:2px;background:linear-gradient(180deg,#fce79c 0,#f9d469 55%,#fbdc82 100%)"></div>
<svg class=b style="left:1109px;top:703.5px" width="13" height="12" viewBox="0 0 15 14"><rect x=".5" y=".5" width="14" height="13" fill="#fff" stroke="#5d626b"/><rect x="1" y="1" width="13" height="3" fill="#c9cdd4"/><path d="M.5 4.500H14.500M.5 8.500H14.500M5 .5V13.500M10 .5V13.500" stroke="#5d626b" stroke-width="1"/></svg>
<svg class=b style="left:1128px;top:703.5px" width="13" height="12" viewBox="0 0 15 14"><rect x=".5" y=".5" width="14" height="13" fill="#a4a8b0" stroke="#5d626b"/><rect x="3.500" y="2.500" width="8" height="9" fill="#fff" stroke="#5d626b" stroke-width=".8"/><path d="M5.500 5.500H9.500M5.500 7.500H9.500" stroke="#9aa0a9" stroke-width=".8"/></svg>
<svg class=b style="left:1146.5px;top:703.5px" width="13" height="12" viewBox="0 0 15 14"><rect x=".5" y=".5" width="14" height="13" fill="#a4a8b0" stroke="#5d626b"/><rect x="2" y="1.500" width="4" height="6.500" fill="#fff"/><rect x="7" y="1.500" width="6" height="5" fill="#fff"/></svg>
<div class=b style="left:1101px;top:700px;width:1px;height:19px;background:#aeb3bb"></div>
<div class=b style="left:1102px;top:700px;width:1px;height:19px;background:#f2f3f5"></div>
<span class=t style="left:1172.00px;top:701.80px;font:normal normal 11.5px/15px 'Liberation Sans',sans-serif;color:#333;letter-spacing:-0.807px;">100%</span>
<svg class=b style="left:1207px;top:701px" width="16" height="16" viewBox="0 0 16 16"><circle cx="8" cy="8" r="7.3" fill="#f3f4f6" stroke="#80858e"/><path d="M4 8H12" stroke="#444" stroke-width="1.8"/></svg>
<svg class=b style="left:1323px;top:701px" width="16" height="16" viewBox="0 0 16 16"><circle cx="8" cy="8" r="7.3" fill="#f3f4f6" stroke="#80858e"/><path d="M4 8H12" stroke="#444" stroke-width="1.8"/><path d="M8 4V12" stroke="#444" stroke-width="1.8"/></svg>
<div class=b style="left:1223px;top:708.5px;width:100px;height:1px;background:#8d929b"></div>
<div class=b style="left:1223px;top:709.5px;width:100px;height:1px;background:#f4f5f7"></div>
<svg class=b style="left:1269px;top:702px" width="10" height="13" viewBox="0 0 10 13"><path d="M.5 .5H9.5V8L5 12.5 .5 8Z" fill="#f2f3f5" stroke="#7a7f88"/></svg>
<svg class=b style="left:1348px;top:709px" width="9" height="9" viewBox="0 0 9 9"><rect x="6" y="0" width="2" height="2" fill="#9aa0a9"/><rect x="3" y="3" width="2" height="2" fill="#9aa0a9"/><rect x="6" y="3" width="2" height="2" fill="#9aa0a9"/><rect x="0" y="6" width="2" height="2" fill="#9aa0a9"/><rect x="3" y="6" width="2" height="2" fill="#9aa0a9"/><rect x="6" y="6" width="2" height="2" fill="#9aa0a9"/></svg>
</body></html>
